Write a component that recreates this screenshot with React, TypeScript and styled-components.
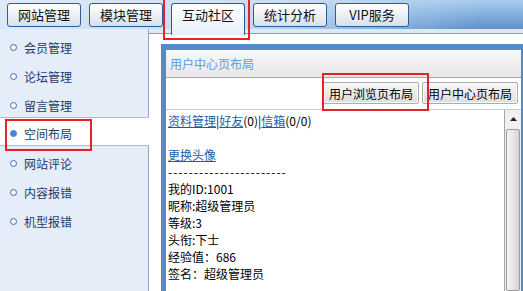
import React from 'react'
import styled, { createGlobalStyle } from 'styled-components'

const GlobalStyle = createGlobalStyle`
  html, body {
    margin: 0;
    padding: 0;
    background: #fff;
  }
  body {
    font-family: "Noto Sans CJK SC", "Microsoft YaHei", sans-serif;
    font-size: 12px;
    color: #000;
  }
`

const Page = styled.div`
  position: relative;
  width: 523px;
  height: 291px;
  overflow: hidden;
  display: flex;
  flex-direction: column;
  background: #fff;
`

/* top tab bar */
const TopBar = styled.div`
  flex: none;
  height: 29px;
  box-sizing: border-box;
  display: flex;
  align-items: flex-start;
  gap: 8px;
  padding: 3px 0 0 7px;
  position: relative;
  z-index: 1;
  background:
    linear-gradient(to right, rgba(224, 235, 247, 0.96) 0%, rgba(210, 226, 244, 0.85) 50%, rgba(200, 220, 242, 0) 92%),
    linear-gradient(to bottom, #a9cdef, #5d90cb);
`

const Tab = styled.div<{ $active?: boolean }>`
  width: 74px;
  height: ${(p) => (p.$active ? 32 : 24)}px;
  box-sizing: border-box;
  border: 1px solid #2d5d94;
  border-bottom: ${(p) => (p.$active ? 'none' : '1px solid #2d5d94')};
  border-radius: ${(p) => (p.$active ? '3px 3px 0 0' : '3px')};
  background: ${(p) =>
    p.$active ? 'linear-gradient(#ffffff, #e6eff9)' : 'linear-gradient(#ffffff 0%, #eef2f7 45%, #d6e0ec 100%)'};
  font-size: 13px;
  line-height: 22px;
  text-align: center;
  color: #111;
`

const Body = styled.div`
  flex: 1;
  display: flex;
  min-height: 0;
`

/* left menu */
const Sidebar = styled.ul`
  flex: none;
  width: 148px;
  margin: 0;
  padding: 1px 0 0;
  list-style: none;
  background: #e5eef8;
  border-right: 1px solid #8ea8c5;
`

const NavItem = styled.li<{ $active?: boolean }>`
  height: 29px;
  box-sizing: border-box;
  display: flex;
  align-items: center;
  gap: 7px;
  padding: ${(p) => (p.$active ? '4px' : '5px')} 0 0 10px;
  font-size: 12px;
  color: #1c3b6c;
  background: ${(p) => (p.$active ? '#fff' : 'transparent')};
  border-top: ${(p) => (p.$active ? '1px solid #a9bdd4' : 'none')};
  border-bottom: ${(p) => (p.$active ? '1px solid #a9bdd4' : 'none')};
  margin-right: ${(p) => (p.$active ? '-1px' : '0')};
`

const Bullet = styled.span<{ $filled?: boolean }>`
  flex: none;
  width: 7px;
  height: 7px;
  box-sizing: border-box;
  border-radius: 50%;
  border: 1.5px solid ${(p) => (p.$filled ? '#3f7dd3' : '#3b6fb3')};
  background: ${(p) => (p.$filled ? '#4a86d8' : '#f4f8fc')};
`

/* right side */
const Main = styled.div`
  flex: 1;
  min-width: 0;
  display: flex;
  flex-direction: column;
`

const MainStrip = styled.div`
  flex: none;
  height: 4px;
  background: #dde9f7;
  border-bottom: 1px solid #7d9fc6;
`

const Panel = styled.section`
  flex: 1;
  min-height: 0;
  margin: 10px 0 0 12px;
  display: flex;
  flex-direction: column;
  border: solid #5589c9;
  border-width: 6px 2px 0 5px;
`

const PanelHeader = styled.div`
  flex: none;
  height: 27px;
  padding-left: 4px;
  line-height: 27px;
  font-size: 12px;
  color: #5b9be0;
  background: linear-gradient(#f8f8f8, #e7e7e7);
  border-bottom: 1px solid #a8a8a8;
`

const Toolbar = styled.div`
  flex: none;
  height: 32px;
  box-sizing: border-box;
  display: flex;
  justify-content: flex-end;
  align-items: flex-start;
  gap: 3px;
  padding: 4px 3px 0 0;
  border-bottom: 1px solid #b5d2ec;
`

const Button = styled.button`
  height: 22px;
  padding: 0 5px;
  font-family: inherit;
  font-size: 12px;
  color: #000;
  border: 1px solid #acacac;
  border-radius: 2px;
  box-shadow: inset 0 0 0 1px #fbfbfb;
  background: linear-gradient(#f6f6f6 0%, #ebebeb 50%, #dcdcdc 100%);
`

const Content = styled.div`
  flex: 1;
  min-height: 0;
  display: flex;
`

const TextBlock = styled.div`
  flex: 1;
  padding: 2px 0 0 2px;
  line-height: 17px;
  font-size: 12px;
  color: #000;
`

const Line = styled.div<{ $spaced?: boolean }>`
  height: 17px;
  white-space: nowrap;
  letter-spacing: ${(p) => (p.$spaced ? '1px' : 'normal')};
`

const Link = styled.a`
  color: #1f5ca8;
  text-decoration: underline;
`

const Scrollbar = styled.div`
  flex: none;
  width: 16px;
  display: flex;
  flex-direction: column;
  background: #f0f0f0;
  border-left: 1px solid #a3a3a3;
`

const ArrowButton = styled.div`
  flex: none;
  height: 18px;
  display: flex;
  align-items: center;
  justify-content: center;
`

const Thumb = styled.div`
  flex: 1;
  margin: 1px 1px 0 1px;
  border: 1px solid #9c9c9c;
  border-radius: 2px;
  background: linear-gradient(to right, #f4f4f4 0%, #e6e6e6 50%, #d3d3d3 100%);
`

/* red highlight marks drawn over the screenshot */
const Mark = styled.div<{ $x: number; $y: number; $w: number; $h: number }>`
  position: absolute;
  left: ${(p) => p.$x}px;
  top: ${(p) => p.$y}px;
  width: ${(p) => p.$w}px;
  height: ${(p) => p.$h}px;
  box-sizing: border-box;
  border: 2px solid #e8202a;
  z-index: 5;
  pointer-events: none;
`

const tabs = ['网站管理', '模块管理', '互动社区', '统计分析', 'VIP服务']
const menu = ['会员管理', '论坛管理', '留言管理', '空间布局', '网站评论', '内容报错', '机型报错']

export default function App() {
  return (
    <>
      <GlobalStyle />
      <Page>
        <TopBar>
          {tabs.map((t) => (
            <Tab key={t} $active={t === '互动社区'}>
              {t}
            </Tab>
          ))}
        </TopBar>
        <Body>
          <Sidebar>
            {menu.map((m) => (
              <NavItem key={m} $active={m === '空间布局'}>
                <Bullet $filled={m === '空间布局'} />
                {m}
              </NavItem>
            ))}
          </Sidebar>
          <Main>
            <MainStrip />
            <Panel>
              <PanelHeader>用户中心页布局</PanelHeader>
              <Toolbar>
                <Button>用户浏览页布局</Button>
                <Button>用户中心页布局</Button>
              </Toolbar>
              <Content>
                <TextBlock>
                  <Line>
                    <Link>资料管理</Link>|<Link>好友</Link>(0)|<Link>信箱</Link>(0/0)
                  </Line>
                  <Line />
                  <Line>
                    <Link>更换头像</Link>
                  </Line>
                  <Line $spaced>-----------------------</Line>
                  <Line>我的ID:1001</Line>
                  <Line>昵称:超级管理员</Line>
                  <Line>等级:3</Line>
                  <Line>头衔:下士</Line>
                  <Line>经验值：686</Line>
                  <Line>签名：超级管理员</Line>
                </TextBlock>
                <Scrollbar>
                  <ArrowButton>
                    <svg width="7" height="4" viewBox="0 0 7 4">
                      <path d="M0 4 L3.5 0 L7 4 Z" fill="#222" />
                    </svg>
                  </ArrowButton>
                  <Thumb />
                </Scrollbar>
              </Content>
            </Panel>
          </Main>
        </Body>
        <Mark $x={163} $y={-2} $w={87} $h={42} />
        <Mark $x={5} $y={119} $w={87} $h={32} />
        <Mark $x={322} $y={73} $w={107} $h={38} />
      </Page>
    </>
  )
}
